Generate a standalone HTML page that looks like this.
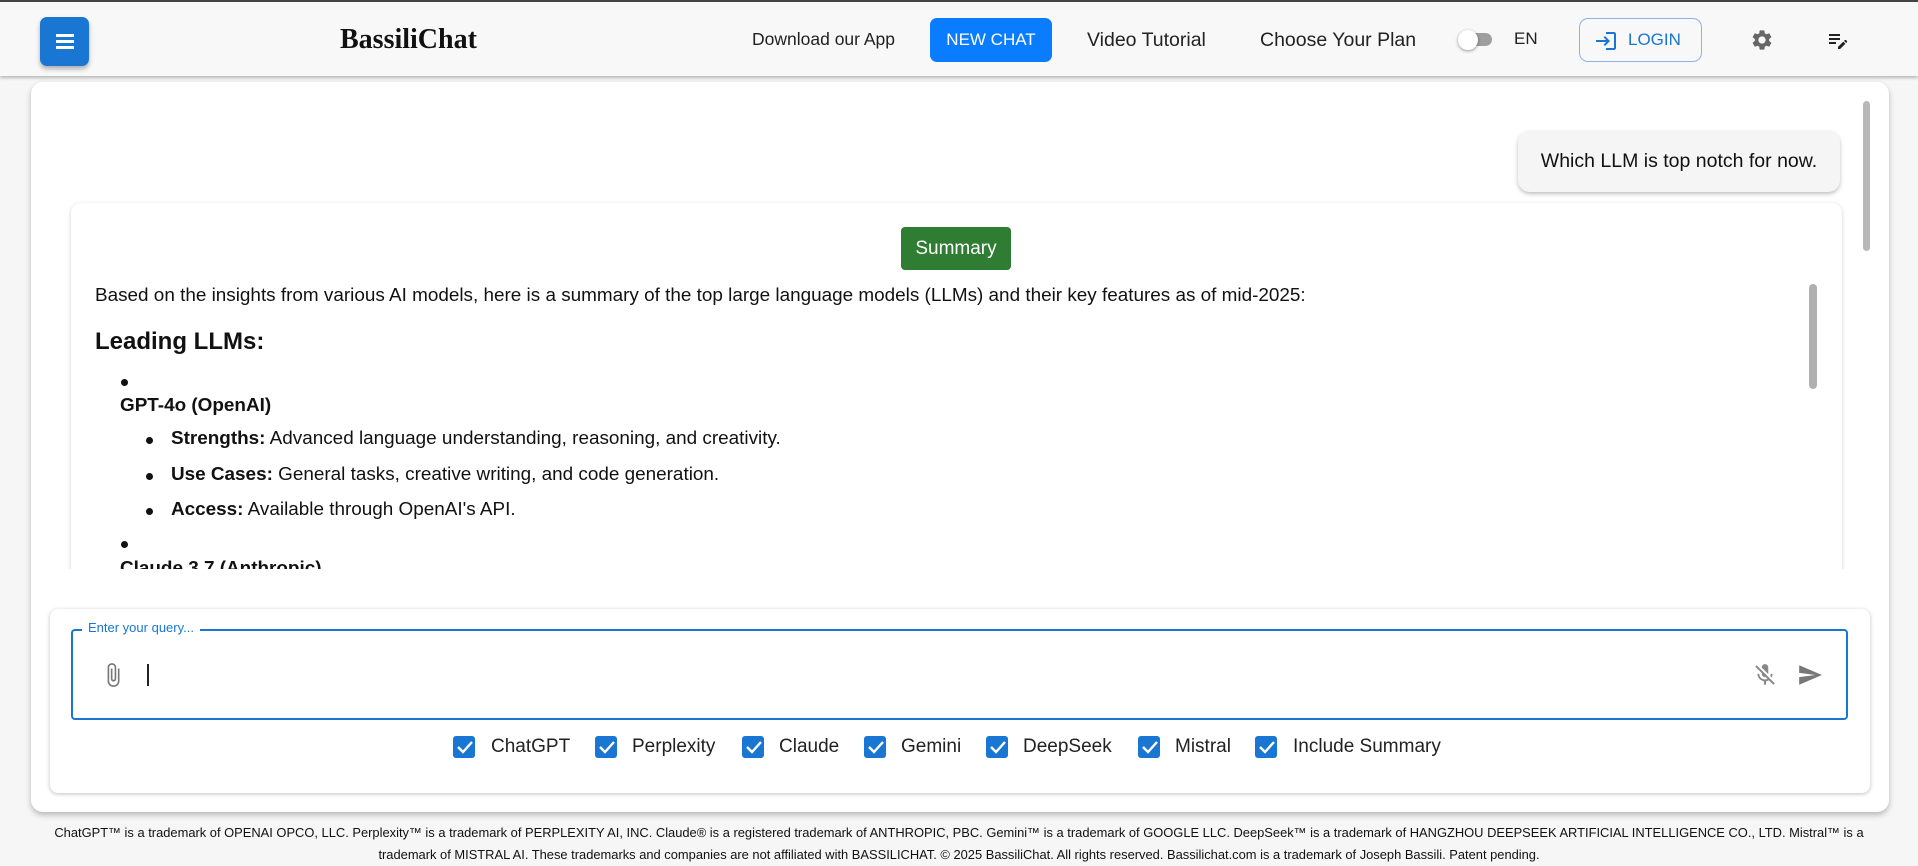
<!DOCTYPE html>
<html><head><meta charset="utf-8">
<style>
*{box-sizing:border-box;margin:0;padding:0}
body{width:1918px;height:866px;overflow:hidden;background:#f6f6f6;font-family:"Liberation Sans",sans-serif;position:relative;color:#111}
.hdr{position:absolute;left:0;top:0;width:1918px;height:76px;background:#f8f8f8;border-top:2px solid #444;box-shadow:0 2px 3px rgba(0,0,0,.25)}
.abs{position:absolute}
.menu{left:40px;top:15px;width:49px;height:49px;background:#1976d2;border-radius:7px;box-shadow:0 3px 5px rgba(0,0,0,.3)}
.menu i{position:absolute;left:16px;width:18px;height:2.5px;background:#fff}
.brand{left:340px;top:22px;font-family:"Liberation Serif",serif;font-weight:bold;font-size:28px;color:#111}
.nav{top:27px;font-size:18px;color:#222}
.newchat{left:930px;top:16px;width:122px;height:44px;background:#0a7cff;border-radius:7px;color:#fff;font-size:17px;text-align:center;line-height:44px}
.login{left:1579px;top:16px;width:123px;height:44px;border:1px solid #8ab4e8;border-radius:9px;color:#1976d2;font-size:17px;line-height:42px;padding-left:48px}
.card{left:31px;top:82px;width:1858px;height:730px;background:#fff;border-radius:12px;box-shadow:0 3px 6px rgba(0,0,0,.25)}
.bubble{left:1518px;top:131px;width:322px;height:61px;background:#f5f5f5;border-radius:12px;box-shadow:0 2px 4px rgba(0,0,0,.25);font-size:19.5px;line-height:61px;text-align:center;color:#111}
.clip{left:60px;top:195px;width:1795px;height:374px;overflow:hidden}
.sum{left:11px;top:8px;width:1771px;height:420px;background:#fff;border-radius:10px;box-shadow:0 1px 4px rgba(0,0,0,.18);overflow:hidden}
.sumbtn{left:830px;top:24px;width:110px;height:43px;background:#2e7d32;color:#fff;border-radius:4px;font-size:19px;text-align:center;line-height:43px}
.t{position:absolute;font-size:18.9px;white-space:nowrap;color:#111}
.dot{position:absolute;width:7px;height:7px;border-radius:50%;background:#111}
.panel{left:50px;top:609px;width:1820px;height:184px;background:#fff;border-radius:8px;box-shadow:0 1px 4px rgba(0,0,0,.25)}
.inp{left:71px;top:629px;width:1777px;height:91px;border:2px solid #1976d2;border-radius:4px}
.lbl{left:82px;top:620px;background:#fff;padding:0 6px;color:#1976d2;font-size:13px}
.cb{position:absolute;top:736px;width:22px;height:22px;background:#1976d2;border-radius:3px}
.cbl{position:absolute;top:736px;font-size:19px;color:#222}
.foot{left:49px;top:822px;width:1820px;text-align:center;font-size:12.9px;line-height:22px;color:#111}
</style></head><body>
<div class="hdr">
 <div class="abs menu"><i style="top:17px"></i><i style="top:23px"></i><i style="top:29px"></i></div>
 <div class="abs brand">BassiliChat</div>
 <div class="abs nav" style="left:752px;font-size:17.5px">Download our App</div>
 <div class="abs newchat">NEW CHAT</div>
 <div class="abs nav" style="left:1087px;font-size:19.5px">Video Tutorial</div>
 <div class="abs nav" style="left:1260px;font-size:19.5px">Choose Your Plan</div>
 <div class="abs" style="left:1462px;top:31px;width:30px;height:13px;border-radius:7px;background:#9e9e9e"></div>
 <div class="abs" style="left:1458px;top:28px;width:20px;height:20px;border-radius:50%;background:#fff;box-shadow:0 1px 3px rgba(0,0,0,.4)"></div>
 <div class="abs nav" style="left:1514px;font-size:17px">EN</div>
 <div class="abs login">LOGIN</div>
 <svg class="abs" style="left:1594px;top:27px" width="24" height="24" viewBox="0 0 24 24"><path d="M11 7 9.6 8.4l2.6 2.6H2v2h10.2l-2.6 2.6L11 17l5-5zm9 12h-8v2h8c1.1 0 2-.9 2-2V5c0-1.1-.9-2-2-2h-8v2h8z" fill="#1976d2"/></svg>
 <svg class="abs" style="left:1750px;top:26px" width="24" height="24" viewBox="0 0 24 24"><path fill="#666" d="M19.14 12.94c.04-.3.06-.61.06-.94 0-.32-.02-.64-.07-.94l2.030-1.58a.49.49 0 0 0 .12-.61l-1.92-3.32a.488.488 0 0 0-.59-.22l-2.39.96c-.5-.38-1.03-.7-1.62-.94l-.36-2.54a.484.484 0 0 0-.48-.41h-3.840c-.24 0-.43.17-.47.41l-.36 2.54c-.59.24-1.13.57-1.62.94l-2.39-.96c-.22-.08-.47 0-.59.22L2.74 8.87c-.12.21-.08.47.12.61l2.03 1.58c-.05.3-.09.63-.09.94s.02.64.07.94l-2.03 1.58a.49.49 0 0 0-.12.61l1.92 3.32c.12.22.37.29.59.22l2.39-.96c.5.38 1.03.7 1.62.94l.36 2.54c.05.24.24.41.48.41h3.84c.24 0 .44-.17.47-.41l.36-2.54c.59-.24 1.13-.56 1.62-.94l2.39.96c.22.08.47 0 .59-.22l1.92-3.32c.12-.22.07-.47-.12-.61zM12 15.6c-1.98 0-3.6-1.62-3.6-3.6s1.62-3.6 3.6-3.6 3.6 1.62 3.6 3.6-1.62 3.6-3.6 3.6"/></svg>
 <svg class="abs" style="left:1826px;top:26px" width="24" height="24" viewBox="0 0 24 24"><path fill="#222" d="M3 10h11v2H3zm0-2h11V6H3zm0 8h7v-2H3zm15.01-3.13.71-.71c.39-.39 1.02-.39 1.41 0l.71.71c.39.39.39 1.02 0 1.41l-.71.71zm-.71.71-5.3 5.3V21h2.12l5.3-5.3z"/></svg>
</div>

<div class="abs card"></div>
<div class="abs" style="left:1863px;top:101px;width:7px;height:150px;background:#b8b8b8;border-radius:4px"></div>
<div class="abs bubble">Which LLM is top notch for now.</div>

<div class="abs clip"><div class="abs sum">
 <div class="abs sumbtn">Summary</div>
 <div class="t" style="left:24px;top:82px">Based on the insights from various AI models, here is a summary of the top large language models (LLMs) and their key features as of mid-2025:</div>
 <div class="t" style="left:24px;top:125px;font-size:24px;font-weight:bold">Leading LLMs:</div>
 <div class="dot" style="left:50px;top:176px"></div>
 <div class="t" style="left:49px;top:192px;font-weight:bold">GPT-4o (OpenAI)</div>
 <div class="dot" style="left:75px;top:234px"></div>
 <div class="t" style="left:100px;top:225px"><b>Strengths:</b> Advanced language understanding, reasoning, and creativity.</div>
 <div class="dot" style="left:75px;top:270px"></div>
 <div class="t" style="left:100px;top:261px"><b>Use Cases:</b> General tasks, creative writing, and code generation.</div>
 <div class="dot" style="left:75px;top:305px"></div>
 <div class="t" style="left:100px;top:296px"><b>Access:</b> Available through OpenAI's API.</div>
 <div class="dot" style="left:50px;top:338px"></div>
 <div class="t" style="left:49px;top:355px;font-weight:bold">Claude 3.7 (Anthropic)</div>
 <div class="abs" style="left:1738px;top:81px;width:8px;height:105px;background:#b0b0b0;border-radius:4px"></div>
</div></div>

<div class="abs panel"></div>
<div class="abs inp"></div>
<div class="abs lbl">Enter your query...</div>
<svg class="abs" style="left:100px;top:660px" width="26" height="30" viewBox="0 0 24 24"><path fill="#777" d="M16.5 6v11.5c0 2.21-1.79 4-4 4s-4-1.79-4-4V5a2.5 2.5 0 0 1 5 0v10.5c0 .55-.45 1-1 1s-1-.45-1-1V6H10v9.5a2.5 2.5 0 0 0 5 0V5c0-2.21-1.79-4-4-4S7 2.79 7 5v12.5c0 3.04 2.46 5.5 5.5 5.5s5.5-2.46 5.5-5.5V6z"/></svg>
<div class="abs" style="left:147px;top:664px;width:1.5px;height:22px;background:#222"></div>
<svg class="abs" style="left:1752px;top:662px" width="26" height="26" viewBox="0 0 24 24"><path fill="#888" d="M19 11h-1.7c0 .74-.16 1.430-.43 2.05l1.23 1.23c.56-.98.9-2.09.9-3.28m-4.02.17c0-.06.02-.11.02-.17V5c0-1.66-1.34-3-3-3S9 3.34 9 5v.18zM4.27 3 3 4.27l6.01 6.01V11c0 1.66 1.33 3 2.99 3 .22 0 .44-.03.65-.08l1.66 1.66c-.71.33-1.5.52-2.310.52-2.76 0-5.3-2.1-5.3-5.1H5c0 3.41 2.72 6.23 6 6.72V21h2v-3.28c.91-.13 1.770-.45 2.54-.9L19.73 21 21 19.73z"/></svg>
<svg class="abs" style="left:1796px;top:662px" width="28" height="26" viewBox="0 0 24 24"><path fill="#777" d="M2.01 21 23 12 2.01 3 2 10l15 2-15 2z"/></svg>

<div class="cb" style="left:453px"></div><div class="cbl" style="left:491px">ChatGPT</div>
<div class="cb" style="left:595px"></div><div class="cbl" style="left:632px">Perplexity</div>
<div class="cb" style="left:742px"></div><div class="cbl" style="left:779px">Claude</div>
<div class="cb" style="left:864px"></div><div class="cbl" style="left:901px">Gemini</div>
<div class="cb" style="left:986px"></div><div class="cbl" style="left:1023px">DeepSeek</div>
<div class="cb" style="left:1138px"></div><div class="cbl" style="left:1175px">Mistral</div>
<div class="cb" style="left:1255px"></div><div class="cbl" style="left:1293px">Include Summary</div>
<svg class="abs" style="left:0;top:0" width="1918" height="866" viewBox="0 0 1918 866">
<g fill="none" stroke="#fff" stroke-width="2.4">
<path d="M458 747l5 5 9-10"/><path d="M600 747l5 5 9-10"/><path d="M747 747l5 5 9-10"/><path d="M869 747l5 5 9-10"/><path d="M991 747l5 5 9-10"/><path d="M1143 747l5 5 9-10"/><path d="M1260 747l5 5 9-10"/>
</g></svg>

<div class="abs foot">ChatGPT™ is a trademark of OPENAI OPCO, LLC. Perplexity™ is a trademark of PERPLEXITY AI, INC. Claude® is a registered trademark of ANTHROPIC, PBC. Gemini™ is a trademark of GOOGLE LLC. DeepSeek™ is a trademark of HANGZHOU DEEPSEEK ARTIFICIAL INTELLIGENCE CO., LTD. Mistral™ is a trademark of MISTRAL AI. These trademarks and companies are not affiliated with BASSILICHAT. © 2025 BassiliChat. All rights reserved. Bassilichat.com is a trademark of Joseph Bassili. Patent pending.</div>
</body></html>
